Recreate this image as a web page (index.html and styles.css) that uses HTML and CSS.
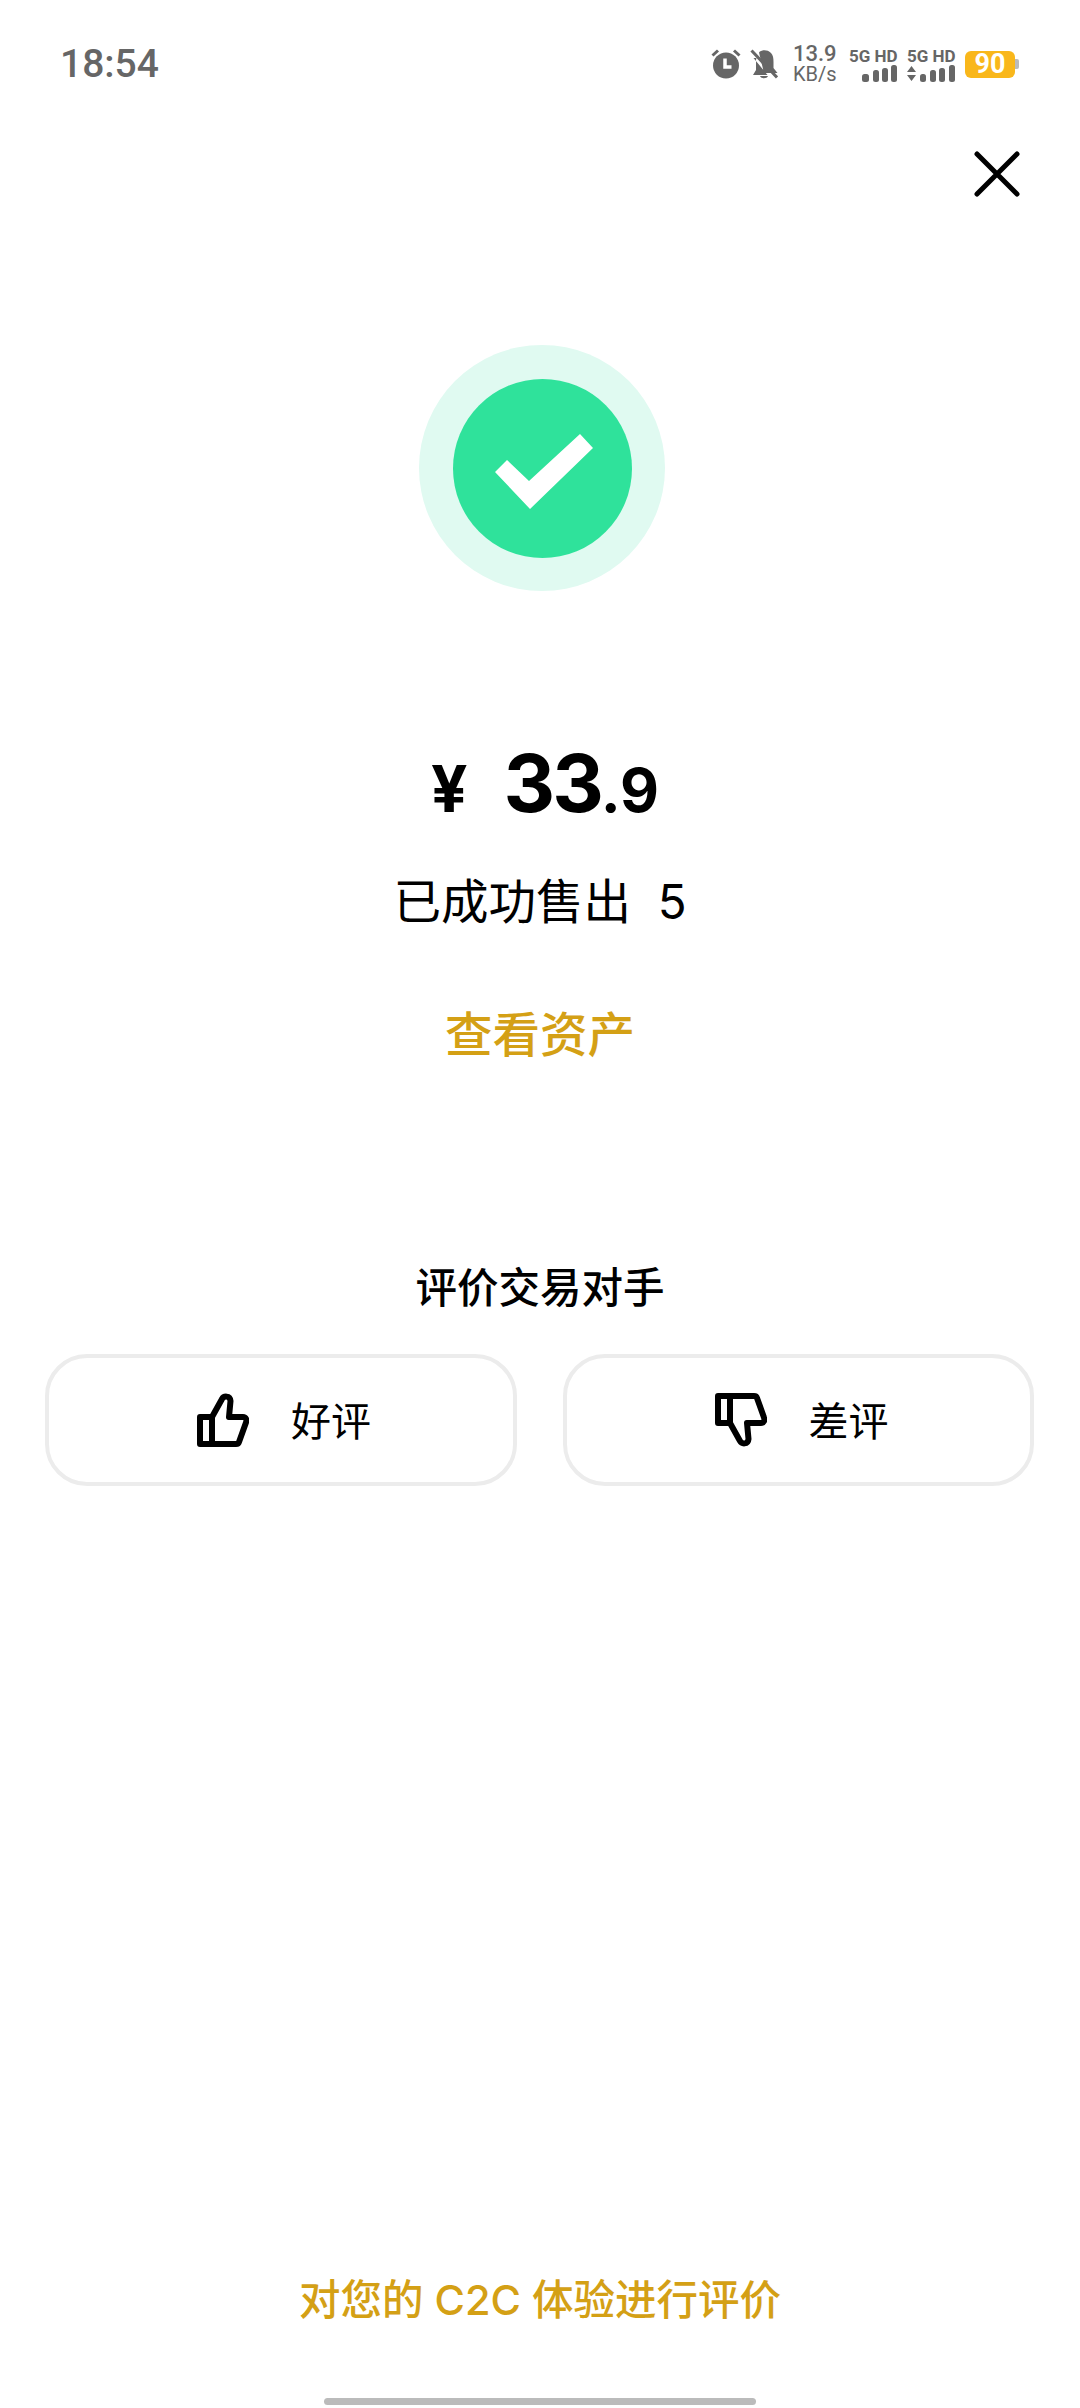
FILE: index.html
```html
<!DOCTYPE html>
<html lang="zh-CN">
<head>
    <meta charset="UTF-8">
    <meta name="viewport" content="width=device-width, initial-scale=1.0">
    <title>已成功售出</title>
    <link rel="stylesheet" href="styles.css">
</head>
<body>
    <div class="page">
        <div class="status-bar">
            <span class="time">18:54</span>
            <div class="status-icons">
                <svg class="alarm" width="30" height="30" viewBox="0 0 30 30">
                    <circle cx="15" cy="16.500" r="13" fill="#666"/>
                    <path d="M14 9.500v8.500h6.500" fill="none" stroke="#fff" stroke-width="3.500"/>
                    <path d="M1.500 6.500L7 1.500M28.500 6.500L23 1.500" stroke="#666" stroke-width="3"/>
                </svg>
                <svg class="bell" width="28" height="30" viewBox="0 0 28 30">
                    <path d="M9 3.500C11 1 17 0 21 4c2 2 2.500 5 2.500 9v6l4 5H14zM3.500 9l14 17H3l3-5v-9c0-1 0-2 .5-3zM10 27h8c-1 3-7 3-8 0z" fill="#666"/>
                    <path d="M1.500 1.500L27 28.500" stroke="#666" stroke-width="3"/>
                </svg>
                <div class="speed"><span class="speed-value">13.9</span><span>KB/s</span></div>
                <div class="sim">
                    <span class="sim-label">5G HD</span>
                    <svg width="48" height="17" viewBox="0 0 48 17">
                        <rect x="13" y="9" width="7" height="8" rx="2.500" fill="#666"/>
                        <rect x="24" y="5" width="6" height="12" rx="2.500" fill="#666"/>
                        <rect x="33" y="3" width="6" height="14" rx="2.500" fill="#666"/>
                        <rect x="42" y="0" width="6" height="17" rx="2.500" fill="#666"/>
                    </svg>
                </div>
                <div class="sim">
                    <span class="sim-label">5G HD</span>
                    <svg width="48" height="17" viewBox="0 0 48 17">
                        <path d="M0 7l4.500-6L9 7zM0 10l4.500 6L9 10z" fill="#666"/>
                        <rect x="13" y="9" width="6" height="8" rx="2.500" fill="#666"/>
                        <rect x="23" y="5" width="6" height="12" rx="2.500" fill="#666"/>
                        <rect x="32" y="3" width="6" height="14" rx="2.500" fill="#666"/>
                        <rect x="42" y="0" width="6" height="17" rx="2.500" fill="#666"/>
                    </svg>
                </div>
                <div class="battery"><span class="battery-level">90</span><span class="battery-cap"></span></div>
            </div>
        </div>

        <div class="close-row">
            <svg width="46" height="46" viewBox="0 0 46 46">
                <path d="M3 3L43 43M43 3L3 43" stroke="#000" stroke-width="5" stroke-linecap="round"/>
            </svg>
        </div>

        <div class="ring">
            <div class="disc">
                <svg class="check" width="98" height="76" viewBox="0 0 98 76">
                    <path d="M0 38L12 26L34 47L85 0L98 14L35 75z" fill="#fff"/>
                </svg>
            </div>
        </div>

        <div class="amount">
            <span class="currency">¥</span>
            <span class="whole">33</span><span class="fraction">.9</span>
        </div>
        <div class="sold">已成功售出&nbsp; 5</div>
        <div class="link">查看资产</div>

        <div class="rate-title">评价交易对手</div>
        <div class="rate-buttons">
            <div class="rate-btn">
                <svg width="52" height="54" viewBox="0 0 52 54">
                    <path d="M3 24H15L25 6C26.500 3 33 2 33.500 8L32 24H46C49 24 50 27 49 29.500L42 49C41.500 51 41 51 39 51H3ZM15 24V51" fill="none" stroke="#000" stroke-width="6" stroke-linejoin="round"/>
                </svg>
                <span>好评</span>
            </div>
            <div class="rate-btn">
                <svg width="52" height="54" viewBox="0 0 52 54">
                    <path d="M3 30H15L25 48C26.500 51 33 52 33.500 46L32 30H46C49 30 50 27 49 24.500L42 5C41.500 3 41 3 39 3H3ZM15 30V3" fill="none" stroke="#000" stroke-width="6" stroke-linejoin="round"/>
                </svg>
                <span>差评</span>
            </div>
        </div>

        <div class="footer">
            <div class="footer-link">对您的 C2C 体验进行评价</div>
            <div class="home-bar"></div>
        </div>
    </div>
</body>
</html>
```

FILE: styles.css
```css
* {
    box-sizing: border-box;
}
body {
    margin: 0;
    background: #fff;
    font-family: Inter, "Noto Sans CJK SC", sans-serif;
    color: #000;
}
.page {
    display: flex;
    flex-direction: column;
    height: 2408px;
    overflow: hidden;
}
.status-bar {
    display: flex;
    justify-content: space-between;
    align-items: center;
    height: 36px;
    margin-top: 46px;
    padding: 0 61px 0 60px;
    color: #666;
}
.time {
    font-family: Roboto, sans-serif;
    font-size: 39px;
    font-weight: 500;
}
.status-icons {
    display: flex;
    align-items: center;
}
.bell {
    margin-left: 9px;
}
.speed {
    display: flex;
    flex-direction: column;
    margin-left: 15px;
    width: 56px;
    font-family: Roboto, sans-serif;
    font-size: 20px;
    line-height: 20px;
}
.speed-value {
    font-size: 22px;
    font-weight: 500;
}
.sim {
    display: flex;
    flex-direction: column;
    width: 48px;
    margin-right: 10px;
}
.sim-label {
    font-family: Roboto, sans-serif;
    font-size: 17px;
    font-weight: 700;
    line-height: 18px;
    white-space: nowrap;
}
.battery {
    display: flex;
    align-items: center;
}
.battery-level {
    width: 50px;
    height: 27px;
    border-radius: 6px;
    background: #f9b71b;
    color: #fff;
    font-family: Roboto, sans-serif;
    font-size: 27px;
    font-weight: 700;
    line-height: 27px;
    text-align: center;
}
.battery-cap {
    width: 4px;
    height: 10px;
    background: #bbb;
    border-radius: 0 2px 2px 0;
}
.close-row {
    display: flex;
    justify-content: flex-end;
    margin-top: 69px;
    padding-right: 60px;
}
.ring {
    display: flex;
    align-items: center;
    justify-content: center;
    align-self: center;
    width: 246px;
    height: 246px;
    margin: 148px 0 0 4px;
    border-radius: 50%;
    background: #e0faf1;
}
.disc {
    display: flex;
    align-items: center;
    justify-content: center;
    width: 179px;
    height: 179px;
    border-radius: 50%;
    background: #2fe29b;
}
.check {
    margin: 8px 0 0 4px;
}
.amount {
    display: flex;
    align-items: baseline;
    justify-content: center;
    height: 100px;
    margin-top: 142px;
    padding-left: 10px;
    line-height: 100px;
    font-weight: 700;
}
.currency {
    margin-right: 36px;
    font-size: 64px;
}
.whole {
    font-size: 80px;
    letter-spacing: -3px;
}
.fraction {
    font-size: 60px;
}
.sold {
    margin-top: 36px;
    font-size: 47.500px;
    line-height: 66px;
    text-align: center;
}
.link {
    margin-top: 67px;
    color: #d4a015;
    font-size: 47.500px;
    font-weight: 500;
    line-height: 66px;
    text-align: center;
}
.rate-title {
    margin-top: 191px;
    font-size: 41.500px;
    font-weight: 500;
    line-height: 58px;
    text-align: center;
}
.rate-buttons {
    display: grid;
    grid-template-columns: 472px 471px;
    gap: 46px;
    margin-top: 37px;
    padding-left: 45px;
}
.rate-btn {
    display: flex;
    align-items: center;
    justify-content: center;
    gap: 42px;
    height: 132px;
    padding-left: 6px;
    border: 4px solid #ececec;
    border-radius: 42px;
    font-size: 40px;
}
.rate-btn span {
    margin-bottom: 2px;
}
.footer {
    display: flex;
    flex-direction: column;
    align-items: center;
    margin-top: auto;
}
.footer-link {
    color: #d4a015;
    font-size: 41.500px;
    font-weight: 500;
    line-height: 58px;
}
.home-bar {
    width: 432px;
    height: 7px;
    margin: 69px 0 3px;
    border-radius: 4px;
    background: #bbb;
}
```
